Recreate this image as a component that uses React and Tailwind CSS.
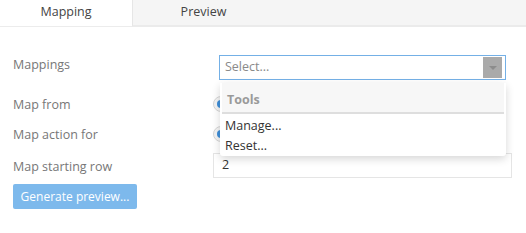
import React from 'react';

const Radio = () => (
  <span className="w-[16px] h-[16px] rounded-full border border-[#d6d6d6] bg-[#f4f4f4] flex items-center justify-center">
    <span className="w-[8px] h-[8px] rounded-full bg-[#3f8fd8]"></span>
  </span>
);

export default function App() {
  return (
    <div className="w-[526px] h-[233px] bg-white relative overflow-hidden text-[12.5px] font-['Open_Sans',sans-serif]">
      {/* tabs */}
      <div className="flex h-[27px]">
        <div className="w-[132px] flex items-start justify-center pt-[3px] border-b border-[#ececec] text-[#444]">
          Mapping
        </div>
        <div className="flex-1 flex items-start justify-center pt-[3px] bg-[#f5f5f5] border-l border-[#e6e6e6] border-b-2 border-b-[#ebebeb] text-[#444] pr-[252px]">
          Preview
        </div>
      </div>

      {/* form */}
      <div className="flex flex-col pl-[13px] pr-[14px] pt-[28px]">
        <div className="flex h-[25px]">
          <div className="w-[200px] text-[#777] leading-[18px] pt-[1px]">Mappings</div>
          <div className="ml-[6px] w-[287px] h-[25px] border border-[#74b0e6] flex items-center justify-between pl-[5px] pr-[3px]">
            <span className="text-[#8a8a8a]">Select...</span>
            <span className="w-[19px] h-[21px] bg-[#aaaaaa] flex items-center justify-center">
              <span className="w-0 h-0 border-l-[4px] border-r-[4px] border-t-[4px] border-l-transparent border-r-transparent border-t-[#8c8c8c]"></span>
            </span>
          </div>
        </div>

        <div className="flex items-center h-[24px] mt-[12px]">
          <div className="w-[200px] text-[#777] pt-[3px]">Map from</div>
          <Radio />
        </div>

        <div className="flex items-center h-[24px] mt-[6px]">
          <div className="w-[200px] text-[#777] pt-[3px]">Map action for</div>
          <Radio />
        </div>

        <div className="flex items-center h-[25px] mt-[7px]">
          <div className="w-[200px] text-[#777] pt-[3px]">Map starting row</div>
          <div className="flex-1 h-[25px] border border-[#e5e5e5] flex items-center pl-[8px] text-[#333]">2</div>
        </div>

        <div className="mt-[6px]">
          <button className="h-[25px] w-[124px] rounded-[2px] bg-[#7db9ec] text-white text-[12px] flex items-center justify-center">
            Generate preview...
          </button>
        </div>
      </div>

      {/* open dropdown menu */}
      <div className="absolute left-[220px] top-[83px] w-[286px] h-[73px] bg-white rounded-b-[3px] shadow-[0_3px_9px_rgba(0,0,0,0.16)]">
        <div className="h-[31px] bg-[#f7f7f7] border-b-2 border-[#dedede] flex items-center pt-[6px] pl-[5px] font-bold text-[#9a9a9a] mx-[2px]">
          Tools
        </div>
        <div className="pl-[5px] h-[20px] flex items-center mt-[2px] text-[#333]">Manage...</div>
        <div className="pl-[5px] h-[20px] flex items-center text-[#333]">Reset...</div>
      </div>
    </div>
  );
}
